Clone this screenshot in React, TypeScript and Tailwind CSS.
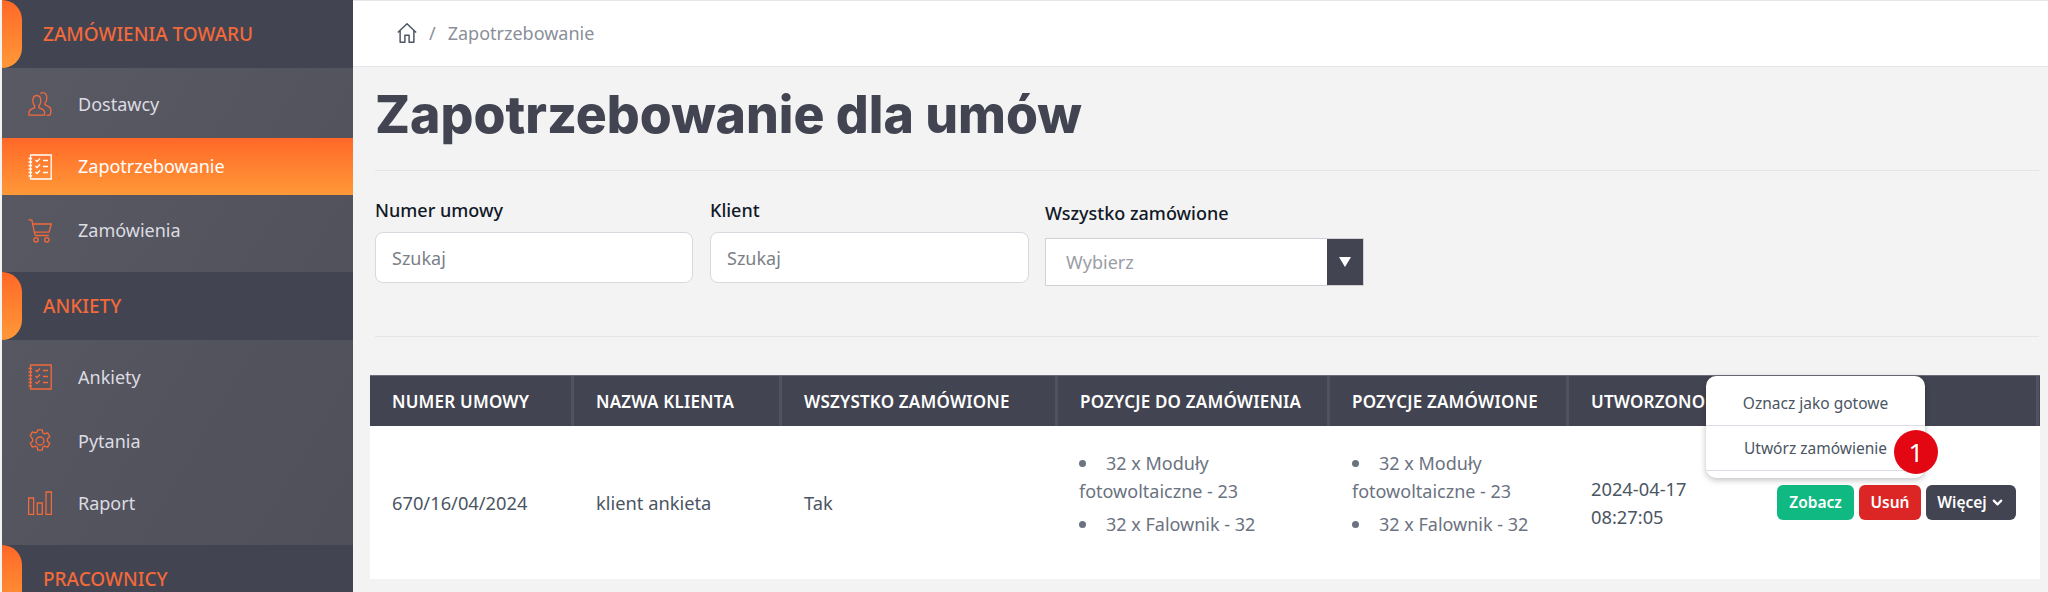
import { ChevronDown } from "lucide-react";
import type { ReactNode } from "react";

function UsersIcon() {
  return (
    <svg width="24" height="24" viewBox="0 0 24 24" fill="none" stroke="currentColor" strokeWidth="1.3">
      <path d="M1 23.2v-2.6c0-2 1-3 3-3.8l2.6-1.1v-2c-1.2-1-1.8-2.6-1.8-4.600 0-3.200 1.600-5.600 4-5.600s4 2.400 4 5.600c0 2-.6 3.600-1.800 4.600v2l2.600 1.100c2 .8 3 1.800 3 3.800v2.600z" />
      <path d="M12.400 1.600c.7-.6 1.500-.9 2.400-.9 2.400 0 4 2.400 4 5.600 0 2-.6 3.600-1.800 4.600v2l2.800 1.200c2 .8 3 1.800 3 3.700v2.600c0 1.700-1 3-2.600 3.100h-1.600" />
    </svg>
  );
}

function NotebookIcon() {
  return (
    <svg width="24" height="26" viewBox="0 0 24 26" fill="none" stroke="currentColor" strokeWidth="1.3">
      <path d="M2.500 1h20.700v24H2.500z" />
      <path d="M.5 4.500h3.600M.5 8h3.600M.5 11.500h3.600M.5 15h3.600M.5 18.500h3.600M.5 22h3.600" />
      <path d="M7.500 6l1.500 1.500 3-3M7.500 12l1.500 1.500 3-3M7.500 18l1.500 1.500 3-3" />
      <path d="M15 6.500h5M15 12.500h5M15 18.500h5" />
    </svg>
  );
}

function CartIcon() {
  return (
    <svg width="24" height="24" viewBox="0 0 24 24" fill="none" stroke="currentColor" strokeWidth="1.3">
      <path d="M.5 .8h3.300l3 14.500c.2.800.8 1.200 1.500 1.200h12.500" />
      <path d="M4.700 5h18.600l-2.300 8.200H6.400" />
      <circle cx="8" cy="20.800" r="2.200" />
      <circle cx="18.800" cy="20.800" r="2.200" />
    </svg>
  );
}

function GearIcon() {
  return (
    <svg width="24" height="24" viewBox="0 0 24 24" fill="none" stroke="currentColor" strokeWidth="1.3">
      <circle cx="12" cy="12" r="4" />
      <path d="M9.800 .8h4.400l.7 3.200 1.700.9 3-1 2.200 3.800-2.400 2.100v2.400l2.400 2.100-2.200 3.800-3-1-1.700.9-.7 3.200H9.800l-.7-3.200-1.700-.9-3 1-2.200-3.800 2.400-2.100v-2.400L2.200 6.700l2.200-3.800 3 1 1.700-.9z" strokeLinejoin="round" />
    </svg>
  );
}

function BarsIcon() {
  return (
    <svg width="24" height="24" viewBox="0 0 24 24" fill="none" stroke="currentColor" strokeWidth="1.3">
      <path d="M.6 7h5v16.400h-5zM9.300 12h5v11.400h-5zM18 1h5.400v22.400H18z" />
    </svg>
  );
}

function SectionHeader({ label }: { label: string }) {
  return (
    <div className="relative flex h-[68px] shrink-0 items-center bg-[#424451] pl-[41px]">
      <div className="absolute left-0 top-0 h-[68px] w-[20px] rounded-r-[20px] bg-gradient-to-b from-[#ff6728] to-[#ff9838]" />
      <span className="text-[19px] font-medium text-[#f2693a]">{label}</span>
    </div>
  );
}

function SideItem({
  icon,
  label,
  active,
  className,
}: {
  icon: ReactNode;
  label: string;
  active?: boolean;
  className: string;
}) {
  return (
    <div
      className={`flex shrink-0 items-center pl-[26px] ${className} ${
        active ? "bg-gradient-to-b from-[#ff6728] to-[#ff9838] text-white" : "text-[#dcdce2]"
      }`}
    >
      <span className={`flex w-[50px] ${active ? "text-white" : "text-[#f2693a]"}`}>{icon}</span>
      <span className="text-[18px]">{label}</span>
    </div>
  );
}

function PositionList() {
  return (
    <div className="pb-[18px] text-[18px] leading-[28px] text-[#6b7280]">
      <div>
        <span className="mr-[20px] inline-block h-[7px] w-[7px] rounded-full bg-[#6b7280] align-[3px]" />
        32 x Moduły
      </div>
      <div>fotowoltaiczne - 23</div>
      <div className="mt-[5px]">
        <span className="mr-[20px] inline-block h-[7px] w-[7px] rounded-full bg-[#6b7280] align-[3px]" />
        32 x Falownik - 32
      </div>
    </div>
  );
}

const headers = [
  { label: "NUMER UMOWY", width: "w-[204px]" },
  { label: "NAZWA KLIENTA", width: "w-[208px]" },
  { label: "WSZYSTKO ZAMÓWIONE", width: "w-[276px]" },
  { label: "POZYCJE DO ZAMÓWIENIA", width: "w-[272px]" },
  { label: "POZYCJE ZAMÓWIONE", width: "w-[239px]" },
  { label: "UTWORZONO", width: "w-[470px]" },
];

export default function App() {
  return (
    <div className="flex h-[592px] w-[2048px] overflow-hidden bg-[#f3f3f3] font-['Noto_Sans',sans-serif]">
      <aside className="ml-[2px] flex w-[351px] shrink-0 flex-col bg-gradient-to-br from-[#5a5a65] to-[#4f4f5a]">
        <SectionHeader label="ZAMÓWIENIA TOWARU" />
        <SideItem icon={<UsersIcon />} label="Dostawcy" className="h-[70px] pt-[2px]" />
        <SideItem icon={<NotebookIcon />} label="Zapotrzebowanie" active className="h-[57px]" />
        <SideItem icon={<CartIcon />} label="Zamówienia" className="h-[77px] pb-[6px]" />
        <SectionHeader label="ANKIETY" />
        <div className="flex h-[205px] shrink-0 flex-col pt-[5px]">
          <SideItem icon={<NotebookIcon />} label="Ankiety" className="h-[64px]" />
          <SideItem icon={<GearIcon />} label="Pytania" className="h-[62px] pt-[2px]" />
          <SideItem icon={<BarsIcon />} label="Raport" className="h-[62px] pt-[2px]" />
        </div>
        <SectionHeader label="PRACOWNICY" />
      </aside>

      <main className="min-w-0 flex-1">
        <div className="flex h-[67px] items-center border-y border-[#e5e7eb] bg-white pb-[1px] pl-[43px] text-[18px] text-[#8a8f99]">
          <svg width="22" height="22" viewBox="0 0 24 24" fill="none" stroke="#4b5563" strokeWidth="1.6" strokeLinejoin="round">
            <path d="M2 11.500 12 2l10 9.500M4.500 9.500V22h5.200v-7.500h4.600V22h5.200V9.500" />
          </svg>
          <span className="ml-[11px] mr-[12px]">/</span>
          <span>Zapotrzebowanie</span>
        </div>

        <div className="pl-[22px] pr-[9px]">
          <h1 className="h-[103px] pt-[15px] font-['Inter',sans-serif] text-[51.7px] font-extrabold leading-[64px] text-[#424451]">
            Zapotrzebowanie dla umów
          </h1>
          <div className="h-px bg-[#e5e5e5]" />

          <div className="flex h-[166px] items-start gap-[17px] border-b border-[#e5e5e5] pt-[26px]">
            <div className="w-[318px]">
              <div className="text-[18px] font-medium leading-[26px] text-[#111827]">Numer umowy</div>
              <input
                placeholder="Szukaj"
                className="mt-[9px] h-[51px] w-full rounded-[8px] border border-[#d8d8de] bg-white px-[16px] text-[18px] placeholder:text-[#7b7f88]"
              />
            </div>
            <div className="w-[319px]">
              <div className="text-[18px] font-medium leading-[26px] text-[#111827]">Klient</div>
              <input
                placeholder="Szukaj"
                className="mt-[9px] h-[51px] w-full rounded-[8px] border border-[#d8d8de] bg-white px-[16px] text-[18px] placeholder:text-[#7b7f88]"
              />
            </div>
            <div className="-ml-[1px] w-[319px] pt-[3px]">
              <div className="text-[18px] font-medium leading-[26px] text-[#111827]">Wszystko zamówione</div>
              <div className="mt-[12px] flex h-[48px] border border-[#d0d0d6] bg-white">
                <span className="flex flex-1 items-center pl-[20px] text-[18px] text-[#9a9da5]">Wybierz</span>
                <span className="flex w-[36px] items-center justify-center bg-[#424451]">
                  <svg width="12" height="10" viewBox="0 0 12 10" fill="#fff">
                    <path d="M0 0h12L6 10z" />
                  </svg>
                </span>
              </div>
            </div>
          </div>

          <div className="relative -ml-[5px] mt-[38px] w-[1670px]">
            <div className="flex h-[51px] border-t border-[#6b6d78] bg-[#424451] text-[17px] font-semibold tracking-[0.2px] text-white">
              {headers.map((h) => (
                <div
                  key={h.label}
                  className={`flex shrink-0 items-center border-r-[3px] border-[#4f5262] pl-[22px] pt-[1px] ${h.width}`}
                >
                  {h.label}
                </div>
              ))}
            </div>
            <div className="flex h-[153px] items-center bg-white text-[18.3px] text-[#4b5563]">
              <div className="w-[204px] shrink-0 pl-[22px]">670/16/04/2024</div>
              <div className="w-[208px] shrink-0 pl-[22px]">klient ankieta</div>
              <div className="w-[276px] shrink-0 pl-[22px]">Tak</div>
              <div className="w-[272px] shrink-0 pl-[21px]">
                <PositionList />
              </div>
              <div className="w-[239px] shrink-0 pl-[22px]">
                <PositionList />
              </div>
              <div className="w-[208px] shrink-0 pl-[22px] leading-[28px]">
                2024-04-17
                <br />
                08:27:05
              </div>
              <div className="flex gap-[5px] text-[15.5px] font-semibold text-white">
                <span className="flex h-[35px] w-[77px] items-center justify-center rounded-[6px] bg-[#10b981]">Zobacz</span>
                <span className="flex h-[35px] w-[62px] items-center justify-center rounded-[6px] bg-[#dc2626]">Usuń</span>
                <span className="flex h-[35px] w-[90px] items-center justify-center gap-[3px] rounded-[6px] bg-[#424451]">
                  Więcej <ChevronDown size={15} strokeWidth={3.5} />
                </span>
              </div>
            </div>

            <div className="absolute left-[1336px] top-[1px] w-[219px] rounded-[10px] bg-white text-[15.5px] text-[#4b5563] shadow-[0_2px_6px_rgba(0,0,0,0.25)]">
              <div className="flex h-[50px] items-center justify-center border-b border-[#dcdce6] pt-[7px]">Oznacz jako gotowe</div>
              <div className="flex h-[45px] items-center justify-center border-b border-[#dcdce6] pt-[1px]">Utwórz zamówienie</div>
              <div className="h-[7px]" />
              <div className="absolute left-[188px] top-[54px] flex h-[44px] w-[44px] items-center justify-center rounded-full bg-[#e30613] text-[26px] text-white">
                1
              </div>
            </div>
          </div>
        </div>
      </main>
    </div>
  );
}
